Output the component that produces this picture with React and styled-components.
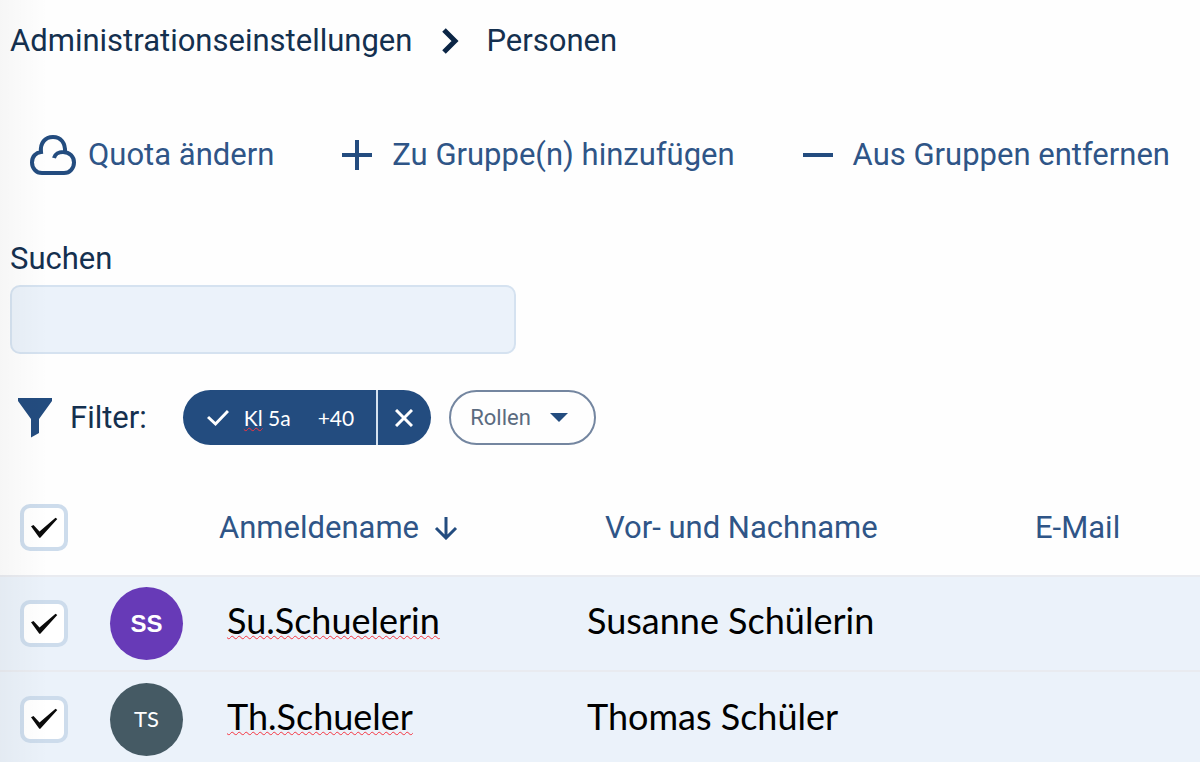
import React, { useState } from "react";
import styled, { createGlobalStyle } from "styled-components";

const people = [
  {
    login: "Su.Schuelerin",
    name: "Susanne Schülerin",
    initials: "SS",
    color: "#673ab7",
    bold: true,
  },
  {
    login: "Th.Schueler",
    name: "Thomas Schüler",
    initials: "TS",
    color: "#455a64",
  },
];

function Checkbox({ label, checked, onChange }) {
  return (
    <CheckWrap>
      <input
        type="checkbox"
        aria-label={label}
        checked={checked}
        onChange={onChange}
      />
      {checked && (
        <svg width="28" height="22" viewBox="0 0 28 22">
          <path d="M1 9.300 3.500 8 9.500 14.500 25.500 .8 27.300 2 10.300 20.800H9.300Z" fill="#0a0a0a" />
        </svg>
      )}
    </CheckWrap>
  );
}

function App() {
  const [selected, setSelected] = useState(people.map(() => true));
  const [search, setSearch] = useState("");
  const all = selected.every(Boolean);

  const toggle = (index) =>
    setSelected(selected.map((s, i) => (i === index ? !s : s)));

  return (
    <Page>
      <GlobalStyle />
      <Breadcrumb aria-label="Breadcrumb">
        <a href="#admin">Administrationseinstellungen</a>
        <svg width="20" height="26" viewBox="0 0 20 26">
          <path d="M5 2 16 13 5 24" fill="none" stroke="#0b2545" strokeWidth="5" />
        </svg>
        <a href="#personen">Personen</a>
      </Breadcrumb>

      <Toolbar>
        <Action $gap="12px">
          <svg width="46" height="40" viewBox="0 0 46 40">
            <path
              d="M24 23C25 19 29 17 33 17 40 17 44 22 44 27.5S40 38 34 38H12C6 38 2 33 2 27.5 2 21.500 6 17.500 11 17 10 8 15 2 23 2 31 2 35.500 8 35 17"
              fill="none"
              stroke="#234c7f"
              strokeWidth="4"
            />
          </svg>
          Quota ändern
        </Action>
        <Action $gap="20px">
          <svg width="30" height="30" viewBox="0 0 30 30">
            <path d="M0 15H30M15 0V30" stroke="#234c7f" strokeWidth="4" />
          </svg>
          Zu Gruppe(n) hinzufügen
        </Action>
        <Action $gap="20px">
          <svg width="30" height="30" viewBox="0 0 30 30">
            <path d="M0 15H30" stroke="#234c7f" strokeWidth="4" />
          </svg>
          Aus Gruppen entfernen
        </Action>
      </Toolbar>

      <Search>
        <label htmlFor="search">Suchen</label>
        <input
          id="search"
          type="text"
          value={search}
          onChange={(e) => setSearch(e.target.value)}
        />
      </Search>

      <FilterBar>
        <FilterTitle>
          <svg width="34" height="40" viewBox="0 0 34 40">
            <path d="M0 0H34V3L21 21V35L13 39.500V21L0 3Z" fill="#234c7f" />
          </svg>
          Filter:
        </FilterTitle>
        <Chip>
          <ChipMain>
            <svg width="22" height="18" viewBox="0 0 22 18">
              <path
                d="M1 8 8.500 15 21 2"
                fill="none"
                stroke="#fff"
                strokeWidth="3"
              />
            </svg>
            <span>
              <Misspelled>Kl</Misspelled> 5a
            </span>
            <span>+40</span>
          </ChipMain>
          <ChipClear aria-label="Filter entfernen">
            <svg width="18" height="18" viewBox="0 0 18 18">
              <path
                d="M1 1 17 17M17 1 1 17"
                fill="none"
                stroke="#fff"
                strokeWidth="3"
              />
            </svg>
          </ChipClear>
        </Chip>
        <RoleSelect>
          <select aria-label="Rollen">
            <option>Rollen</option>
          </select>
          <svg width="18" height="9" viewBox="0 0 18 9">
            <path d="M0 0H18L9 9Z" fill="#234c7f" />
          </svg>
        </RoleSelect>
      </FilterBar>

      <Table>
        <colgroup>
          <col className="check" />
          <col className="avatar" />
          <col className="login" />
          <col className="name" />
          <col />
        </colgroup>
        <thead>
          <tr>
            <Head $pad="20px">
              <Checkbox
                label="Alle auswählen"
                checked={all}
                onChange={() => setSelected(people.map(() => !all))}
              />
            </Head>
            <Head />
            <Head>
              <SortButton>
                Anmeldename
                <svg width="24" height="24" viewBox="0 0 24 24">
                  <path
                    d="M12 1V22M2 12 12 22 22 12"
                    fill="none"
                    stroke="#234c7f"
                    strokeWidth="3"
                  />
                </svg>
              </SortButton>
            </Head>
            <Head $pad="18px">
              <SortButton>Vor- und Nachname</SortButton>
            </Head>
            <Head>
              <SortButton>E-Mail</SortButton>
            </Head>
          </tr>
        </thead>
        <tbody>
          {people.map((p, i) => (
            <tr key={p.login}>
              <Cell $pad="20px">
                <Checkbox
                  label={p.name}
                  checked={selected[i]}
                  onChange={() => toggle(i)}
                />
              </Cell>
              <Cell $pad="10px">
                <Avatar $color={p.color} $bold={p.bold}>
                  {p.initials}
                </Avatar>
              </Cell>
              <NameCell $pad="8px">
                <Misspelled>{p.login}</Misspelled>
              </NameCell>
              <NameCell>{p.name}</NameCell>
              <Cell />
            </tr>
          ))}
        </tbody>
      </Table>
    </Page>
  );
}

export default App;

const GlobalStyle = createGlobalStyle`
  * {
    box-sizing: border-box;
  }
  html {
    scrollbar-width: none;
  }
  body {
    margin: 0;
    background: #fefefe;
    color: #14304f;
    font-family: Roboto, "Liberation Sans", sans-serif;
    font-size: 31px;
    line-height: 36px;
  }
  button {
    border: 0;
    padding: 0;
    background: none;
    color: inherit;
    font: inherit;
    cursor: pointer;
  }
  svg {
    display: block;
    flex: none;
  }
`;

const Page = styled.main`
  position: relative;
  overflow: hidden;
  padding-top: 23px;

  /* shadow cast by the side navigation */
  &::after {
    content: "";
    position: absolute;
    inset: 0 auto 0 0;
    width: 48px;
    background: linear-gradient(to right, rgba(0, 0, 0, 0.03), transparent);
    pointer-events: none;
  }
`;

const Breadcrumb = styled.nav`
  display: flex;
  align-items: center;
  gap: 27px;
  padding: 0 10px;

  a {
    color: inherit;
    text-decoration: none;
  }
`;

const Toolbar = styled.div`
  display: flex;
  align-items: center;
  gap: 68px;
  padding: 0 30px;
  margin-top: 76px;
  white-space: nowrap;
`;

const Action = styled.button`
  display: flex;
  align-items: center;
  gap: ${(props) => props.$gap};
  color: #2f5587;
`;

const Search = styled.div`
  display: flex;
  flex-direction: column;
  gap: 8px;
  width: 43%;
  padding-left: 10px;
  margin-top: 66px;

  input {
    height: 69px;
    padding: 0 16px;
    border: 2px solid #d5e2f0;
    border-radius: 10px;
    background: #ebf2fa;
    color: inherit;
    font: inherit;
  }
`;

const FilterBar = styled.div`
  display: flex;
  align-items: center;
  gap: 18px;
  padding-left: 18px;
  margin-top: 36px;
`;

const FilterTitle = styled.div`
  display: flex;
  align-items: center;
  gap: 18px;
  margin-right: 18px;
`;

const Chip = styled.div`
  display: flex;
  height: 55px;
  border-radius: 28px;
  overflow: hidden;
  background: #234c7f;
  color: #fff;
  font-family: Lato, sans-serif;
  font-size: 21px;
`;

const ChipMain = styled.button`
  display: flex;
  align-items: center;
  padding: 0 22px 0 24px;

  span {
    white-space: pre;
  }
  svg {
    margin-right: 15px;
  }
  svg + span {
    margin-right: 27px;
  }
`;

const ChipClear = styled.button`
  padding: 0 18px 0 17px;
  border-left: 2px solid #d5e2f0;
`;

const RoleSelect = styled.div`
  display: grid;
  align-items: center;

  select {
    grid-area: 1 / 1;
    appearance: none;
    width: 147px;
    height: 55px;
    padding: 0 19px;
    border: 2px solid #7486a0;
    border-radius: 28px;
    background: transparent;
    color: #5b6b80;
    font-family: inherit;
    font-size: 22px;
  }
  svg {
    grid-area: 1 / 1;
    justify-self: end;
    margin-right: 28px;
    pointer-events: none;
  }
`;

const Misspelled = styled.span`
  text-decoration: underline wavy #f5333f 1px;
  text-underline-offset: 1px;
  text-decoration-skip-ink: none;
`;

const Table = styled.table`
  width: 100%;
  margin-top: 35px;
  border-collapse: collapse;
  table-layout: fixed;

  .check {
    width: 100px;
  }
  .avatar {
    width: 119px;
  }
  .login {
    width: 368px;
  }
  .name {
    width: 448px;
  }
`;

const Head = styled.th`
  height: 96px;
  padding: 0 0 0 ${(props) => props.$pad || "0"};
  color: #2f5587;
  font-weight: 400;
  text-align: left;
`;

const SortButton = styled.button`
  display: flex;
  align-items: center;
  gap: 15px;
`;

const Cell = styled.td`
  height: 95px;
  padding: 0 0 0 ${(props) => props.$pad || "0"};
  border-top: 2px solid #e9ebf0;
  background: #ebf2fa;
`;

const NameCell = styled(Cell)`
  padding-bottom: 7px;
  color: #000;
  font-family: Lato, sans-serif;
  font-size: 36px;
`;

const CheckWrap = styled.label`
  display: grid;
  place-items: center;
  width: 48px;
  height: 47px;

  input {
    grid-area: 1 / 1;
    appearance: none;
    width: 100%;
    height: 100%;
    margin: 0;
    border: 4px solid #cddcec;
    border-radius: 10px;
    background: #fff;
  }
  svg {
    grid-area: 1 / 1;
    pointer-events: none;
  }
`;

const Avatar = styled.div`
  display: grid;
  place-items: center;
  width: 73px;
  height: 73px;
  border-radius: 50%;
  background: ${(props) => props.$color};
  color: #fff;
  font-family: ${(props) => (props.$bold ? '"Liberation Sans"' : "Lato")}, sans-serif;
  font-size: ${(props) => (props.$bold ? "24px" : "22px")};
  font-weight: ${(props) => (props.$bold ? 700 : 400)};
`;
